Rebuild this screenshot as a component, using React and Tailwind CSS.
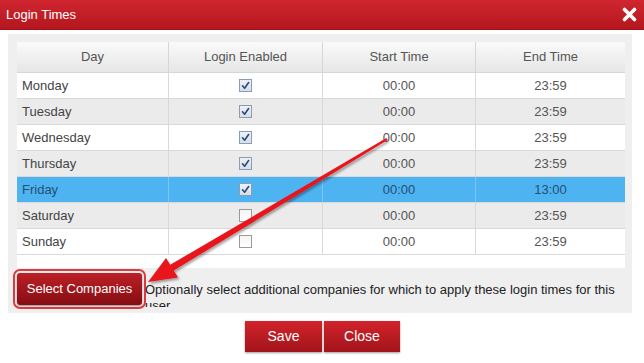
import React from "react";

const rows = [
  { day: "Monday", on: true, start: "00:00", end: "23:59", bg: "bg-white" },
  { day: "Tuesday", on: true, start: "00:00", end: "23:59", bg: "bg-[#ebebeb]" },
  { day: "Wednesday", on: true, start: "00:00", end: "23:59", bg: "bg-white" },
  { day: "Thursday", on: true, start: "00:00", end: "23:59", bg: "bg-[#ebebeb]" },
  { day: "Friday", on: true, start: "00:00", end: "13:00", bg: "bg-[#4eb3f1]", sel: true },
  { day: "Saturday", on: false, start: "00:00", end: "23:59", bg: "bg-[#ebebeb]" },
  { day: "Sunday", on: false, start: "00:00", end: "23:59", bg: "bg-white" },
];

function Check({ on }) {
  if (on) {
    return (
      <div className="w-[13px] h-[13px] border border-[#8c9db3] bg-gradient-to-b from-[#eef2f6] to-[#d5dde7] flex items-center justify-center">
        <svg width="9" height="9" viewBox="0 0 9 9">
          <path d="M1.5 4.8 L3.6 7.2 L7.6 1.5" fill="none" stroke="#2a4a7a" strokeWidth="1.6" strokeLinecap="round" strokeLinejoin="round" />
        </svg>
      </div>
    );
  }
  return <div className="w-[13px] h-[13px] border border-[#9a9a9a] bg-gradient-to-b from-[#f4f4f4] to-white" />;
}

export default function App() {
  return (
    <div
      className="w-[644px] h-[363px] bg-white relative overflow-hidden"
      style={{ fontFamily: '"Liberation Sans", Arial, sans-serif' }}
    >
      {/* Title bar */}
      <div className="h-[30px] bg-gradient-to-b from-[#d02630] to-[#b5161e] border-b border-[#9c1118] flex items-center justify-between pl-[6px] pr-[7px]">
        <span className="text-white text-[13px] leading-none">Login Times</span>
        <svg width="15" height="15" viewBox="0 0 15 15">
          <path d="M2.5 2.5 L12.5 12.5 M12.5 2.5 L2.5 12.5" stroke="white" strokeWidth="3.6" strokeLinecap="round" />
        </svg>
      </div>

      {/* Panel */}
      <div className="ml-[8px] mt-[4px] w-[624px] h-[279px] bg-[#efefef] pt-[8px] pl-[9px] overflow-hidden">
        <div className="w-[608px] h-[226px] bg-white">
          <div className="grid grid-cols-[152px_154px_153px_149px] h-[31px] bg-gradient-to-b from-[#fafafa] to-[#e6e6e6] border-b border-[#d6d6d6] text-[13px] text-[#555]">
            {["Day", "Login Enabled", "Start Time", "End Time"].map((h, i) => (
              <div
                key={h}
                className={`flex items-center justify-center ${i < 3 ? "border-r border-[#d6d6d6]" : ""}`}
              >
                {h}
              </div>
            ))}
          </div>
          {rows.map((r) => (
            <div
              key={r.day}
              className={`grid grid-cols-[152px_154px_153px_149px] h-[26px] border-b border-[#d9d9d9] text-[13px] ${r.bg} ${r.sel ? "text-[#24506f]" : "text-[#444]"}`}
            >
              <div className={`flex items-center pl-[5px] border-r ${r.sel ? "border-[#7cc6f3]" : "border-[#d9d9d9]"}`}>{r.day}</div>
              <div className={`flex items-center justify-center border-r ${r.sel ? "border-[#7cc6f3]" : "border-[#d9d9d9]"}`}>
                <Check on={r.on} />
              </div>
              <div className={`flex items-center justify-center border-r ${r.sel ? "border-[#7cc6f3] text-[#24506f]" : "border-[#d9d9d9] text-[#555]"}`}>{r.start}</div>
              <div className={`flex items-center justify-center ${r.sel ? "text-[#24506f]" : "text-[#555]"}`}>{r.end}</div>
            </div>
          ))}
        </div>

        <div className="flex items-start mt-[5px]">
          <button className="w-[125px] h-[32px] shrink-0 rounded-[3px] bg-gradient-to-b from-[#bd2027] to-[#850d12] text-white text-[13px] outline-2 outline-offset-2 outline-[#dd3a40] shadow-[0_1px_2px_rgba(0,0,0,0.4)]">
            Select Companies
          </button>
          <div className="ml-[3px] mt-[9px] h-[25px] overflow-hidden text-[13px] leading-[16px] text-[#222]">
            Optionally select additional companies for which to apply these login times for this user.
          </div>
        </div>
      </div>

      {/* Bottom buttons */}
      <div className="flex justify-center gap-[2px] mt-[8px] pl-[1px]">
        <button className="w-[77px] h-[31px] bg-gradient-to-b from-[#d2232b] to-[#a3141b] text-white text-[14px] shadow-[0_1px_2px_rgba(0,0,0,0.4)]">
          Save
        </button>
        <button className="w-[76px] h-[31px] bg-gradient-to-b from-[#d2232b] to-[#a3141b] text-white text-[14px] shadow-[0_1px_2px_rgba(0,0,0,0.4)]">
          Close
        </button>
      </div>

      {/* Annotation arrow */}
      <svg className="absolute left-0 top-0 pointer-events-none" width="644" height="363" viewBox="0 0 644 363">
        <defs>
          <filter id="sh" x="-10%" y="-10%" width="120%" height="120%">
            <feDropShadow dx="1.5" dy="2" stdDeviation="1.2" floodColor="#000" floodOpacity="0.35" />
          </filter>
        </defs>
        <polygon
          filter="url(#sh)"
          fill="#e8151b"
          points="148,282 178,277.5 173.8,270.5 387.6,140 386.4,138 170.2,264.8 166,258"
        />
      </svg>
    </div>
  );
}
